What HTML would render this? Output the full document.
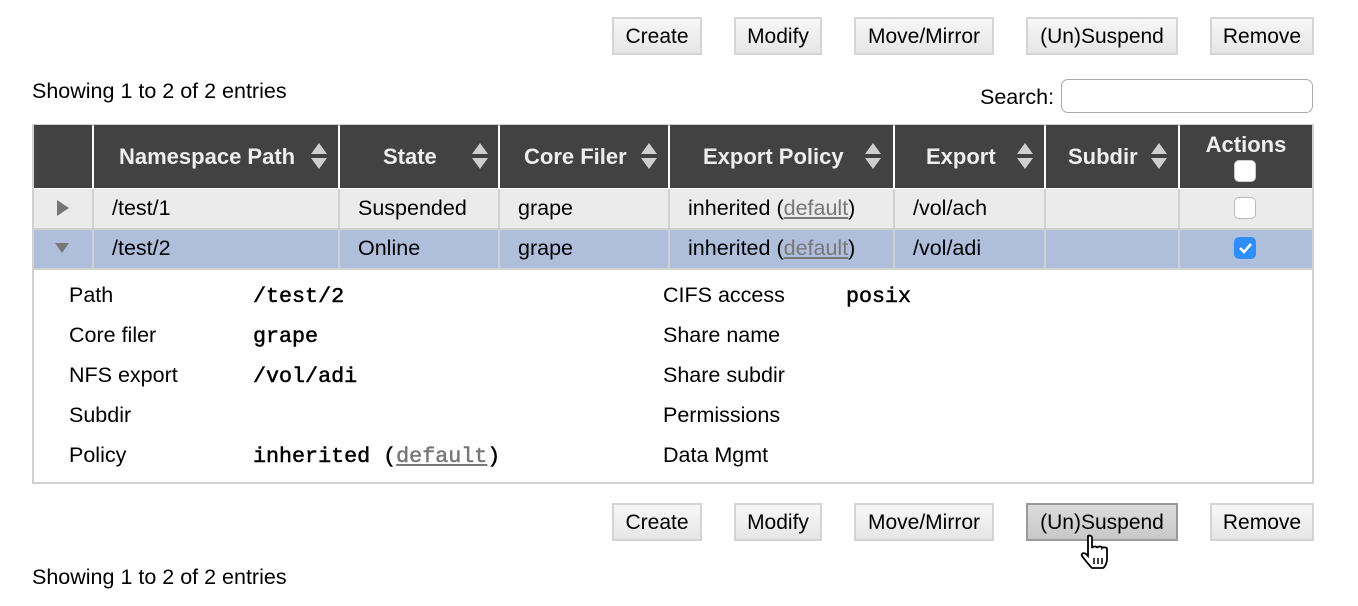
<!DOCTYPE html>
<html><head><style>
body{margin:0;width:1358px;height:606px;background:#fff;font-family:"Liberation Sans",Arial,sans-serif;font-size:21.5px;color:#000;position:relative;overflow:hidden}
.a{position:absolute}
.btn{position:absolute;height:38px;border:2px solid #d4d4d4;background:linear-gradient(#f7f7f7,#e6e6e6);box-sizing:border-box;text-align:center;line-height:36px;font-size:21px}
.btn.act{background:linear-gradient(#dcdcdc,#c8c8c8);border-color:#9a9a9a}
.th{position:absolute;top:125px;height:63px;background:#424242;color:#eee;font-weight:bold;font-size:22px;line-height:63px;box-sizing:border-box;white-space:nowrap}
.cell{position:absolute;height:39px;line-height:39px;box-sizing:border-box;padding-left:18px;white-space:nowrap}
.mono{font-family:"Liberation Mono",monospace;font-size:21.7px;font-weight:normal;-webkit-text-stroke:0.5px #000}
.mono a{-webkit-text-stroke:0.5px #777}
a{color:#777;text-decoration:underline}
.cb{position:absolute;width:22px;height:22px;border-radius:5px;box-sizing:border-box}
</style></head><body>
<div class="btn" style="left:612px;top:17px;width:90px">Create</div>
<div class="btn" style="left:734px;top:17px;width:88px">Modify</div>
<div class="btn" style="left:854px;top:17px;width:140px">Move/Mirror</div>
<div class="btn" style="left:1026px;top:17px;width:152px">(Un)Suspend</div>
<div class="btn" style="left:1210px;top:17px;width:104px">Remove</div>
<div class="a" style="left:32px;top:79px">Showing 1 to 2 of 2 entries</div>
<div class="a" style="left:980px;top:85px">Search:</div>
<div class="a" style="left:1061px;top:79px;width:252px;height:34px;border:1px solid #aaa;border-radius:7px;box-sizing:border-box"></div>

<div class="a" style="left:32px;top:124px;width:1282px;height:360px;border:2px solid #d0d0d0;box-sizing:border-box;background:#fff"></div>
<div class="th" style="left:34px;width:58px"></div>
<div class="th" style="left:94px;width:244px;padding-left:25px">Namespace Path</div>
<div class="th" style="left:340px;width:158px;padding-left:43px">State</div>
<div class="th" style="left:500px;width:168px;padding-left:24px">Core Filer</div>
<div class="th" style="left:670px;width:223px;padding-left:33px">Export Policy</div>
<div class="th" style="left:895px;width:149px;padding-left:31px">Export</div>
<div class="th" style="left:1046px;width:132px;padding-left:22px">Subdir</div>
<div class="th" style="left:1180px;width:132px;text-align:center;line-height:40px">Actions</div>
<div class="cb" style="left:1234px;top:160px;background:#fff;border:1px solid #ccc"></div>
<svg class="a" style="left:0;top:0" width="1358" height="200">
<g fill="#cfcfcf">
<path d="M311 154l8-11 8 11z M311 158l8 11 8-11z"/>
<path d="M472 154l8-11 8 11z M472 158l8 11 8-11z"/>
<path d="M641 154l8-11 8 11z M641 158l8 11 8-11z"/>
<path d="M865 154l8-11 8 11z M865 158l8 11 8-11z"/>
<path d="M1017 154l8-11 8 11z M1017 158l8 11 8-11z"/>
<path d="M1151 154l8-11 8 11z M1151 158l8 11 8-11z"/>
</g></svg>
<div class="a" style="left:34px;top:189px;width:1278px;height:39px;background:#ebebeb"></div>
<div class="a" style="left:34px;top:230px;width:1278px;height:38px;background:#aebedb"></div>
<div class="a" style="left:34px;top:228px;width:1278px;height:2px;background:#d0d0d0"></div>
<div class="a" style="left:34px;top:268px;width:1278px;height:2px;background:#d0d0d0"></div>
<div class="a" style="left:92px;top:189px;width:2px;height:79px;background:#d0d0d0"></div>
<div class="a" style="left:338px;top:189px;width:2px;height:79px;background:#d0d0d0"></div>
<div class="a" style="left:498px;top:189px;width:2px;height:79px;background:#d0d0d0"></div>
<div class="a" style="left:668px;top:189px;width:2px;height:79px;background:#d0d0d0"></div>
<div class="a" style="left:893px;top:189px;width:2px;height:79px;background:#d0d0d0"></div>
<div class="a" style="left:1044px;top:189px;width:2px;height:79px;background:#d0d0d0"></div>
<div class="a" style="left:1178px;top:189px;width:2px;height:79px;background:#d0d0d0"></div>
<svg class="a" style="left:0;top:0" width="100" height="270"><path d="M57 200l12 8-12 8z" fill="#777"/><path d="M55 243l14 0-7 10z" fill="#777"/></svg>
<div class="cell" style="left:94px;top:189px">/test/1</div>
<div class="cell" style="left:340px;top:189px">Suspended</div>
<div class="cell" style="left:500px;top:189px">grape</div>
<div class="cell" style="left:670px;top:189px">inherited (<a>default</a>)</div>
<div class="cell" style="left:895px;top:189px">/vol/ach</div>
<div class="cb" style="left:1234px;top:197px;background:#fff;border:1px solid #bbb"></div>
<div class="cell" style="left:94px;top:229px">/test/2</div>
<div class="cell" style="left:340px;top:229px">Online</div>
<div class="cell" style="left:500px;top:229px">grape</div>
<div class="cell" style="left:670px;top:229px">inherited (<a>default</a>)</div>
<div class="cell" style="left:895px;top:229px">/vol/adi</div>
<div class="cb" style="left:1234px;top:237px;background:#2f8ff8"><svg width="22" height="22"><path d="M6 11l4 4 7-8" stroke="#fff" stroke-width="2.5" fill="none"/></svg></div>
<div class="a" style="left:69px;top:275px;line-height:40px">Path<br>Core filer<br>NFS export<br>Subdir<br>Policy</div>
<div class="a mono" style="left:253px;top:277px;line-height:40px">/test/2<br>grape<br>/vol/adi<br><br>inherited (<a>default</a>)</div>
<div class="a" style="left:663px;top:275px;line-height:40px">CIFS access<br>Share name<br>Share subdir<br>Permissions<br>Data Mgmt</div>
<div class="a mono" style="left:846px;top:277px;line-height:40px">posix</div>

<div class="btn" style="left:612px;top:503px;width:90px">Create</div>
<div class="btn" style="left:734px;top:503px;width:88px">Modify</div>
<div class="btn" style="left:854px;top:503px;width:140px">Move/Mirror</div>
<div class="btn act" style="left:1026px;top:503px;width:152px">(Un)Suspend</div>
<div class="btn" style="left:1210px;top:503px;width:104px">Remove</div>
<svg class="a" style="left:1078px;top:534px" width="40" height="40"><path d="M10 2c2-1 4 0 4 2v10c1-2 5-2 5 0 1-2 5-2 5 0 1-1 5-1 5 1v10c0 4-2 8-4 9h-11c-2-2-7-8-10-12-1-2 1-4 4-2l2 2V4c0-1 0-2 0-2z" fill="#fff" stroke="#000" stroke-width="1.8"/><path d="M16 24v6M20 24v6M24 24v6" stroke="#000" stroke-width="1.5"/></svg>
<div class="a" style="left:32px;top:565px">Showing 1 to 2 of 2 entries</div>
</body></html>
